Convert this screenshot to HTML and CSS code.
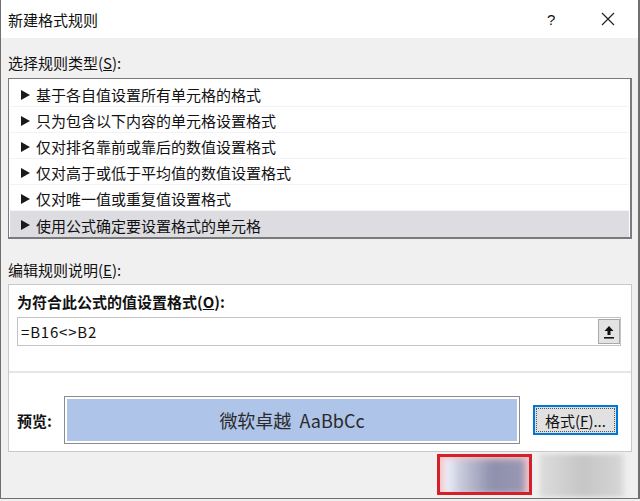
FILE: index.html
```html
<!DOCTYPE html>
<html lang="zh-CN">
<head>
    <meta charset="UTF-8">
    <meta name="viewport" content="width=device-width, initial-scale=1.0">
    <title>新建格式规则</title>
    <link rel="stylesheet" href="styles.css">
</head>
<body>
    <div class="dialog">
        <div class="titlebar">
            <span class="title">新建格式规则</span>
            <span class="help">?</span>
            <span class="close">
                <svg width="14" height="14" viewBox="0 0 14 14"><path d="M1 1L13 13M13 1L1 13" stroke="#222" stroke-width="1.2" fill="none"/></svg>
            </span>
        </div>
        <div class="content">
            <div class="label">选择规则类型(<u>S</u>):</div>
            <ul class="rules">
                <li>基于各自值设置所有单元格的格式</li>
                <li>只为包含以下内容的单元格设置格式</li>
                <li>仅对排名靠前或靠后的数值设置格式</li>
                <li>仅对高于或低于平均值的数值设置格式</li>
                <li>仅对唯一值或重复值设置格式</li>
                <li class="selected">使用公式确定要设置格式的单元格</li>
            </ul>
            <div class="label label-edit">编辑规则说明(<u>E</u>):</div>
            <div class="group">
                <div class="group-title">为符合此公式的值设置格式(<u>O</u>):</div>
                <div class="formula">
                    <span class="formula-text">=B16&lt;&gt;B2</span>
                    <span class="collapse">
                        <svg width="12" height="14" viewBox="0 0 12 14"><path d="M6 1L1.5 6H4.5V10H7.5V6H10.5Z" fill="#111"/><rect x="1" y="12" width="10" height="1.6" fill="#111"/></svg>
                    </span>
                </div>
                <div class="sep"></div>
                <div class="preview-row">
                    <span class="preview-label">预览:</span>
                    <div class="preview"><span>微软卓越&nbsp; AaBbCc</span></div>
                    <button class="format-btn" type="button">格式(<u>F</u>)...</button>
                </div>
            </div>
            <div class="actions">
                <div class="ok"><div class="ok-fill"></div></div>
                <div class="cancel"></div>
            </div>
        </div>
    </div>
</body>
</html>
```

FILE: styles.css
```css
body {
    margin: 0;
    padding: 0;
    font-family: "Noto Sans CJK SC", "Noto Sans", sans-serif;
    color: #111;
    background-color: #f0f0f0;
}

.dialog {
    width: 640px;
    height: 499px;
    box-sizing: border-box;
    border-left: 1px solid #707070;
    border-right: 2px solid #707070;
    border-bottom: 1px solid #707070;
    background-color: #f0f0f0;
    overflow: hidden;
}

.titlebar {
    height: 38px;
    background-color: #ffffff;
    display: flex;
    align-items: center;
    padding-left: 7px;
}

.title {
    font-size: 15px;
    flex: 1;
}

.help {
    font-size: 15px;
    width: 20px;
    margin-right: 34px;
    font-family: "Liberation Sans", sans-serif;
}

.close {
    display: flex;
    margin-right: 23px;
}

.content {
    padding: 0 6px 0 7px;
}

.label {
    font-size: 15px;
    line-height: 20px;
    margin-top: 15px;
    margin-bottom: 5px;
}

.label-edit {
    margin-top: 21px;
    margin-bottom: 4px;
}

.rules {
    list-style: none;
    margin: 0;
    padding: 2px 0 0 0;
    background-color: #ffffff;
    border: 1px solid #7a7a7a;
    border-right-width: 2px;
    border-bottom-width: 2px;
}

.rules li {
    height: 26px;
    box-sizing: border-box;
    border-bottom: 1px solid #f3f3f6;
    display: flex;
    align-items: center;
    font-size: 15px;
    padding-left: 11px;
    padding-top: 2px;
    margin: 0 1px;
}

.rules li:last-child {
    border-bottom: none;
}

.rules li::before {
    content: "";
    width: 0;
    height: 0;
    border-left: 9px solid #1a1a1a;
    border-top: 5px solid transparent;
    border-bottom: 5px solid transparent;
    margin-right: 6px;
}

.rules li.selected {
    background-color: #dcdce1;
}

.group {
    background-color: #ffffff;
    border: 1px solid #c8c8c8;
    padding: 7px 0 7px 0;
}

.group-title {
    font-size: 15px;
    font-weight: bold;
    line-height: 20px;
    padding-left: 8px;
}

.formula {
    margin: 5px 10px 0 8px;
    height: 27px;
    border: 1px solid #c4c4c4;
    display: flex;
    align-items: center;
    justify-content: space-between;
}

.formula-text {
    font-size: 15px;
    padding-left: 3px;
    letter-spacing: 0.8px;
}

.collapse {
    width: 22px;
    height: 25px;
    box-sizing: border-box;
    border: 1px solid #a8a8a8;
    background-color: #e3e3e3;
    display: flex;
    align-items: center;
    justify-content: center;
}

.sep {
    height: 2px;
    background-color: #e6e6e6;
    margin-top: 25px;
}

.preview-row {
    display: flex;
    align-items: center;
    margin-top: 23px;
    padding-left: 8px;
}

.preview-label {
    font-size: 15px;
    font-weight: bold;
    width: 47px;
}

.preview {
    width: 456px;
    height: 48px;
    box-sizing: border-box;
    border: 1px solid #8c8c8c;
    padding: 2px;
    background-color: #ffffff;
}

.preview span {
    display: flex;
    height: 100%;
    align-items: center;
    justify-content: center;
    background-color: #aec4e8;
    font-size: 18px;
    color: #2a2a2a;
}

.format-btn {
    margin-left: 13px;
    width: 85px;
    height: 30px;
    box-sizing: border-box;
    border: 2px solid #0078d7;
    background-color: #e1e1e1;
    font-family: "Noto Sans CJK SC", sans-serif;
    font-size: 15px;
    color: #111;
    padding: 0;
    outline: 1px dotted #555;
    outline-offset: -4px;
}

.actions {
    display: flex;
    justify-content: flex-end;
    gap: 8px;
    margin-top: 2px;
    padding-right: 5px;
}

.ok {
    width: 95px;
    height: 41px;
    box-sizing: border-box;
    border: 3px solid #d42029;
    background-color: #f4c6ca;
    overflow: hidden;
}

.ok-fill {
    height: 100%;
    background: linear-gradient(90deg, #f4f8ff 0%, #c8cadc 20%, #8e90ad 60%, #9a98b4 100%);
    filter: blur(3px);
    margin: 2px 4px 6px 4px;
}

.cancel {
    width: 87px;
    height: 43px;
    background: linear-gradient(90deg, #dcdcdc 0%, #c6c6c6 50%, #d4d4d4 90%, #ececec 100%);
    filter: blur(2px);
}
```
